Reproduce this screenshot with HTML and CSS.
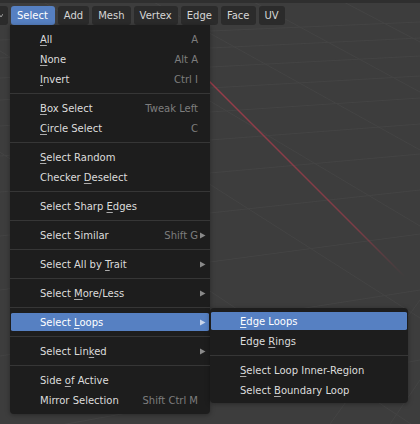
FILE: index.html
```html
<!DOCTYPE html>
<html>
<head>
<meta charset="utf-8">
<link rel="stylesheet" href="styles.css">
</head>
<body>
<div class="viewport">
  <svg class="grid" width="420" height="424" viewBox="0 0 420 424">
    <defs>
      <linearGradient id="xfade" x1="210" y1="82" x2="405" y2="277" gradientUnits="userSpaceOnUse">
        <stop offset="0" stop-color="#9a3c4a" stop-opacity="1"/>
        <stop offset="0.75" stop-color="#9a3c4a" stop-opacity="0.7"/>
        <stop offset="1" stop-color="#9a3c4a" stop-opacity="0"/>
      </linearGradient>
    </defs>
    <g stroke="#444444" stroke-width="1" fill="none">
      <line x1="0" y1="40" x2="420" y2="22"/>
      <line x1="0" y1="58" x2="420" y2="38"/>
      <line x1="0" y1="78" x2="420" y2="56"/>
      <line x1="0" y1="100" x2="420" y2="76"/>
      <line x1="0" y1="126" x2="420" y2="98"/>
      <line x1="0" y1="156" x2="420" y2="124"/>
      <line x1="0" y1="192" x2="420" y2="154"/>
      <line x1="0" y1="236" x2="420" y2="190"/>
      <line x1="0" y1="290" x2="420" y2="234"/>
      <line x1="0" y1="356" x2="420" y2="290"/>
      <line x1="0" y1="436" x2="420" y2="360"/>
      <line x1="150" y1="0" x2="420" y2="150"/>
      <line x1="250" y1="0" x2="420" y2="92"/>
      <line x1="340" y1="0" x2="420" y2="42"/>
      <line x1="40" y1="0" x2="420" y2="226"/>
      <line x1="-80" y1="0" x2="420" y2="318"/>
      <line x1="-200" y1="20" x2="420" y2="430"/>
      <line x1="420" y1="300" x2="330" y2="424"/>
      <line x1="420" y1="380" x2="390" y2="424"/>
    </g>
    <line x1="195" y1="67" x2="405" y2="277" stroke="url(#xfade)" stroke-width="1.4"/>
  </svg>

  <div class="topstrip"></div>
  <div class="header">
    <div class="hbtn partial">
      <svg width="4" height="6" viewBox="0 0 4 6"><polyline points="0,1 2,4 4,1" fill="none" stroke="#9a9a9a" stroke-width="1"/></svg>
    </div>
    <div class="hbtn active">Select</div>
    <div class="hbtn">Add</div>
    <div class="hbtn">Mesh</div>
    <div class="hbtn">Vertex</div>
    <div class="hbtn">Edge</div>
    <div class="hbtn">Face</div>
    <div class="hbtn">UV</div>
  </div>

  <div class="menu main">
    <div class="row"><span class="label"><u>A</u>ll</span><span class="key">A</span><span class="slot"></span></div>
    <div class="row"><span class="label"><u>N</u>one</span><span class="key">Alt A</span><span class="slot"></span></div>
    <div class="row"><span class="label"><u>I</u>nvert</span><span class="key">Ctrl I</span><span class="slot"></span></div>
    <div class="sep"></div>
    <div class="row"><span class="label"><u>B</u>ox Select</span><span class="key">Tweak Left</span><span class="slot"></span></div>
    <div class="row"><span class="label"><u>C</u>ircle Select</span><span class="key">C</span><span class="slot"></span></div>
    <div class="sep"></div>
    <div class="row"><span class="label"><u>S</u>elect Random</span><span class="slot"></span></div>
    <div class="row"><span class="label">Checker <u>D</u>eselect</span><span class="slot"></span></div>
    <div class="sep"></div>
    <div class="row"><span class="label">Select Sharp <u>E</u>dges</span><span class="slot"></span></div>
    <div class="sep"></div>
    <div class="row"><span class="label">Select Similar</span><span class="key">Shift G</span><span class="slot"><svg class="arrow" width="6" height="7" viewBox="0 0 6 7"><polygon points="0,0.5 5.5,3.5 0,6.5"/></svg></span></div>
    <div class="sep"></div>
    <div class="row"><span class="label">Select All by <u>T</u>rait</span><span class="slot"><svg class="arrow" width="6" height="7" viewBox="0 0 6 7"><polygon points="0,0.5 5.5,3.5 0,6.5"/></svg></span></div>
    <div class="sep"></div>
    <div class="row"><span class="label">Select <u>M</u>ore/Less</span><span class="slot"><svg class="arrow" width="6" height="7" viewBox="0 0 6 7"><polygon points="0,0.5 5.5,3.5 0,6.5"/></svg></span></div>
    <div class="sep"></div>
    <div class="row hl"><span class="label">Select <u>L</u>oops</span><span class="slot"><svg class="arrow" width="6" height="7" viewBox="0 0 6 7"><polygon points="0,0.5 5.5,3.5 0,6.5"/></svg></span></div>
    <div class="sep"></div>
    <div class="row"><span class="label">Select Lin<u>k</u>ed</span><span class="slot"><svg class="arrow" width="6" height="7" viewBox="0 0 6 7"><polygon points="0,0.5 5.5,3.5 0,6.5"/></svg></span></div>
    <div class="sep"></div>
    <div class="row"><span class="label">Side <u>o</u>f Active</span><span class="slot"></span></div>
    <div class="row"><span class="label">Mirror Selection</span><span class="key">Shift Ctrl M</span><span class="slot"></span></div>
  </div>

  <div class="menu sub">
    <div class="row hl"><span class="label"><u>E</u>dge Loops</span></div>
    <div class="row"><span class="label">Edge <u>R</u>ings</span></div>
    <div class="sep"></div>
    <div class="row"><span class="label"><u>S</u>elect Loop Inner-Region</span></div>
    <div class="row"><span class="label">Select <u>B</u>oundary Loop</span></div>
  </div>
</div>
</body>
</html>
```

FILE: styles.css
```css
html, body {
  margin: 0;
  padding: 0;
  background: #3d3d3d;
}

.viewport {
  position: relative;
  width: 420px;
  height: 424px;
  overflow: hidden;
  background: #3d3d3d;
  font-family: "DejaVu Sans", sans-serif;
  font-size: 10px;
  color: #dcdcdc;
}

.grid {
  position: absolute;
  left: 0;
  top: 0;
}

.topstrip {
  position: relative;
  height: 3px;
  background: #2f2f2f;
}

.header {
  position: relative;
  display: flex;
  gap: 3px;
  padding-top: 3px;
  height: 19px;
}

.hbtn {
  height: 19px;
  padding: 0 6px;
  display: flex;
  align-items: center;
  background: #2b2b2b;
  border-radius: 3px;
  color: #d6d6d6;
  white-space: nowrap;
}

.hbtn.partial {
  width: 8px;
  padding: 0;
  border-radius: 0 3px 3px 0;
  justify-content: flex-start;
}

.hbtn.partial svg {
  margin-left: -1px;
}

.hbtn.active {
  background: #5680c2;
  color: #ffffff;
  padding: 0 7px 0 6px;
}

.menu {
  position: absolute;
  background: #1d1d1d;
  box-shadow: 0 1px 5px rgba(0, 0, 0, 0.35);
  box-sizing: border-box;
}

.menu.main {
  left: 10px;
  top: 25px;
  width: 200px;
  padding: 4px 0;
  border-radius: 0 0 4px 4px;
}

.menu.sub {
  left: 210px;
  top: 308px;
  width: 198px;
  padding: 3px 0;
  border-radius: 4px;
}

.row {
  height: 20px;
  box-sizing: border-box;
  margin: 0 1px;
  padding: 0 3px 0 29px;
  border-top: 1px solid transparent;
  border-bottom: 1px solid transparent;
  background-clip: padding-box;
  display: flex;
  align-items: center;
  white-space: nowrap;
  border-radius: 2px;
}

.row.hl {
  background-color: #5680c2;
  color: #ffffff;
}

.label {
  flex: 1;
}

.label u {
  text-decoration: underline;
  text-underline-offset: 2px;
  text-decoration-thickness: 1px;
  text-decoration-color: rgba(220, 220, 220, 0.75);
}

.row.hl .label u {
  text-decoration-color: rgba(255, 255, 255, 0.85);
}

.key {
  color: #7d7d7d;
}

.slot {
  width: 8px;
  display: flex;
  align-items: center;
}

.arrow {
  margin-left: 2px;
  fill: #8a8a8a;
}

.row.hl .arrow {
  fill: #c9d5ea;
}

.sep {
  height: 1px;
  margin: 4px 0;
  background: #363636;
}
```
